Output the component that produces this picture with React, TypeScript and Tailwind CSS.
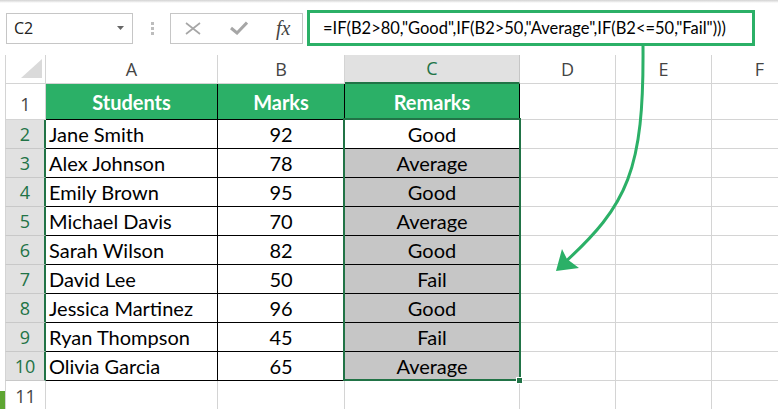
import React from "react";

const data: [string, number, string][] = [
  ["Jane Smith", 92, "Good"],
  ["Alex Johnson", 78, "Average"],
  ["Emily Brown", 95, "Good"],
  ["Michael Davis", 70, "Average"],
  ["Sarah Wilson", 82, "Good"],
  ["David Lee", 50, "Fail"],
  ["Jessica Martinez", 96, "Good"],
  ["Ryan Thompson", 45, "Fail"],
  ["Olivia Garcia", 65, "Average"],
];

function TopBar() {
  return (
    <div className="h-[55px] relative">
      <div className="h-[3px] bg-gradient-to-b from-[#d2d2d2] to-white" />
      <div className="flex items-center h-[36px] mt-[7px]">
        <div className="ml-[6px] w-[127px] h-[31px] border border-[#c6c6c6] flex items-center pl-[7px] pr-[8px] justify-between">
          <span className="font-['Open_Sans'] text-[16px] text-[#222] leading-none">C2</span>
          <svg width="7" height="4" viewBox="0 0 7 4">
            <polygon points="0,0 7,0 3.5,4" fill="#666" />
          </svg>
        </div>
        <div className="ml-[18px] w-[3px] flex flex-col gap-[2px]">
          <div className="w-[3px] h-[3px] bg-[#bdbdbd]" />
          <div className="w-[3px] h-[3px] bg-[#bdbdbd]" />
          <div className="w-[3px] h-[3px] bg-[#bdbdbd]" />
        </div>
        <div className="ml-[16px] w-[133px] h-[31px] border border-[#c6c6c6] flex items-center">
          <svg className="ml-[14px]" width="16" height="13" viewBox="0 0 16 13">
            <path d="M1 1 L15 12 M15 1 L1 12" stroke="#a6a6a6" strokeWidth="1.6" fill="none" />
          </svg>
          <svg className="ml-[29px]" width="18" height="14" viewBox="0 0 18 14">
            <path d="M1 7 L7 12 L17 1.5" stroke="#a6a6a6" strokeWidth="3" fill="none" />
          </svg>
          <span className="ml-[28px] font-['Liberation_Serif'] italic text-[20px] text-[#444] leading-none">
            fx
          </span>
        </div>
        <div className="ml-[4px] w-[448px] h-[36px] border-[3px] border-[#2bb067] flex items-center pl-[13px]">
          <span className="font-['Lato'] text-[16.5px] text-black leading-none">
            =IF(B2&gt;80,"Good",IF(B2&gt;50,"Average",IF(B2&lt;=50,"Fail")))
          </span>
        </div>
      </div>
    </div>
  );
}

const hdr = "font-['Open_Sans'] text-[18px] text-[#444] leading-[25px]";
const cell = "font-['Lato'] text-[20px] text-black leading-[24px] pb-[2px]";

function ColHeaders() {
  return (
    <div className="flex h-[29px]">
      <div className="w-[5px] shrink-0" />
      <div className="w-[41px] shrink-0 border-l border-r border-b border-[#d4d4d4] relative">
        <svg className="absolute left-[15px] top-[4px]" width="22" height="20" viewBox="0 0 22 20">
          <polygon points="21,0 21,19 0,19" fill="#dadada" />
        </svg>
      </div>
      <div className={`w-[172px] shrink-0 border-r border-b border-[#d4d4d4] flex items-center justify-center ${hdr}`}>A</div>
      <div className={`w-[127px] shrink-0 border-r border-b border-[#d4d4d4] flex items-center justify-center ${hdr}`}>B</div>
      <div className="w-[175px] shrink-0 bg-[#e1e1e1] border-r border-r-[#c6c6c6] border-b-2 border-b-[#217346] flex items-center justify-center font-['Open_Sans'] text-[18px] text-[#217346] leading-[25px]">C</div>
      <div className={`w-[96px] shrink-0 border-r border-b border-[#d4d4d4] flex items-center justify-center ${hdr}`}>D</div>
      <div className={`w-[96px] shrink-0 border-r border-b border-[#d4d4d4] flex items-center justify-center ${hdr}`}>E</div>
      <div className={`w-[96px] shrink-0 border-r border-b border-[#d4d4d4] flex items-center justify-center ${hdr}`}>F</div>
    </div>
  );
}

function HeaderRow() {
  const g = "bg-[#2bb067] border-r border-b border-black flex items-center justify-center font-['Lato'] font-bold text-[20px] text-white leading-[24px]";
  return (
    <div className="flex h-[36px]">
      <div className="w-[5px] shrink-0" />
      <div className={`w-[41px] shrink-0 border-l border-r border-b border-[#d4d4d4] flex items-end justify-center pb-[2px] ${hdr}`}>1</div>
      <div className={`w-[172px] shrink-0 ${g}`}>Students</div>
      <div className={`w-[127px] shrink-0 ${g}`}>Marks</div>
      <div className={`w-[175px] shrink-0 ${g}`}>Remarks</div>
      <div className="w-[96px] shrink-0 border-r border-b border-[#d4d4d4]" />
      <div className="w-[96px] shrink-0 border-r border-b border-[#d4d4d4]" />
      <div className="w-[96px] shrink-0 border-r border-b border-[#d4d4d4]" />
    </div>
  );
}

function DataRow({ n, name, mark, remark }: { n: number; name: string; mark: number; remark: string }) {
  return (
    <div className="flex h-[29px]">
      <div className="w-[5px] shrink-0" />
      <div className="w-[41px] shrink-0 bg-[#e1e1e1] border-l border-l-[#d4d4d4] border-b border-b-[#c8c8c8] border-r-2 border-r-[#217346] flex items-end justify-center pb-[1px] font-['Open_Sans'] text-[18px] text-[#217346] leading-[25px]">
        {n}
      </div>
      <div className={`w-[172px] shrink-0 border-r border-b border-black flex items-end pl-[3px] ${cell}`}>{name}</div>
      <div className={`w-[127px] shrink-0 border-r border-b border-black flex items-end justify-center ${cell}`}>{mark}</div>
      <div className={`w-[175px] shrink-0 border-r border-b border-black flex items-end justify-center ${n === 2 ? "bg-white" : "bg-[#c6c6c6]"} ${cell}`}>
        {remark}
      </div>
      <div className="w-[96px] shrink-0 border-r border-b border-[#d4d4d4]" />
      <div className="w-[96px] shrink-0 border-r border-b border-[#d4d4d4]" />
      <div className="w-[96px] shrink-0 border-r border-b border-[#d4d4d4]" />
    </div>
  );
}

function LastRow() {
  return (
    <div className="flex h-[29px]">
      <div className="w-[5px] shrink-0" />
      <div className={`w-[41px] shrink-0 border-l border-r border-[#d4d4d4] flex items-end justify-center pb-[1px] ${hdr}`}>11</div>
      <div className="w-[172px] shrink-0 border-r border-[#d4d4d4]" />
      <div className="w-[127px] shrink-0 border-r border-[#d4d4d4]" />
      <div className="w-[175px] shrink-0 border-r border-[#d4d4d4]" />
      <div className="w-[96px] shrink-0 border-r border-[#d4d4d4]" />
      <div className="w-[96px] shrink-0 border-r border-[#d4d4d4]" />
      <div className="w-[96px] shrink-0 border-r border-[#d4d4d4]" />
    </div>
  );
}

export default function App() {
  return (
    <div className="w-[778px] h-[409px] bg-white overflow-hidden relative">
      <TopBar />
      <ColHeaders />
      <HeaderRow />
      {data.map((r, i) => (
        <DataRow key={i} n={i + 2} name={r[0]} mark={r[1]} remark={r[2]} />
      ))}
      <LastRow />

      {/* selection outline */}
      <div className="absolute left-[343px] top-[118px] w-[178px] h-[263px] border-2 border-[#217346] pointer-events-none" />
      {/* fill handle */}
      <div className="absolute left-[516px] top-[377px] w-[7px] h-[7px] bg-[#217346] border border-white" />

      {/* sheet tab sliver */}
      <div className="absolute left-0 bottom-0 w-[5px] h-[18px] bg-[#5ea532]" />

      {/* annotation arrow */}
      <svg className="absolute left-0 top-0 pointer-events-none" width="778" height="409" viewBox="0 0 778 409">
        <path d="M643 46 C644 170 628 205 563 264" stroke="#2bb067" strokeWidth="3" fill="none" />
        <polygon points="556,271 562,249 567,259 579,268" fill="#2bb067" />
      </svg>
    </div>
  );
}
